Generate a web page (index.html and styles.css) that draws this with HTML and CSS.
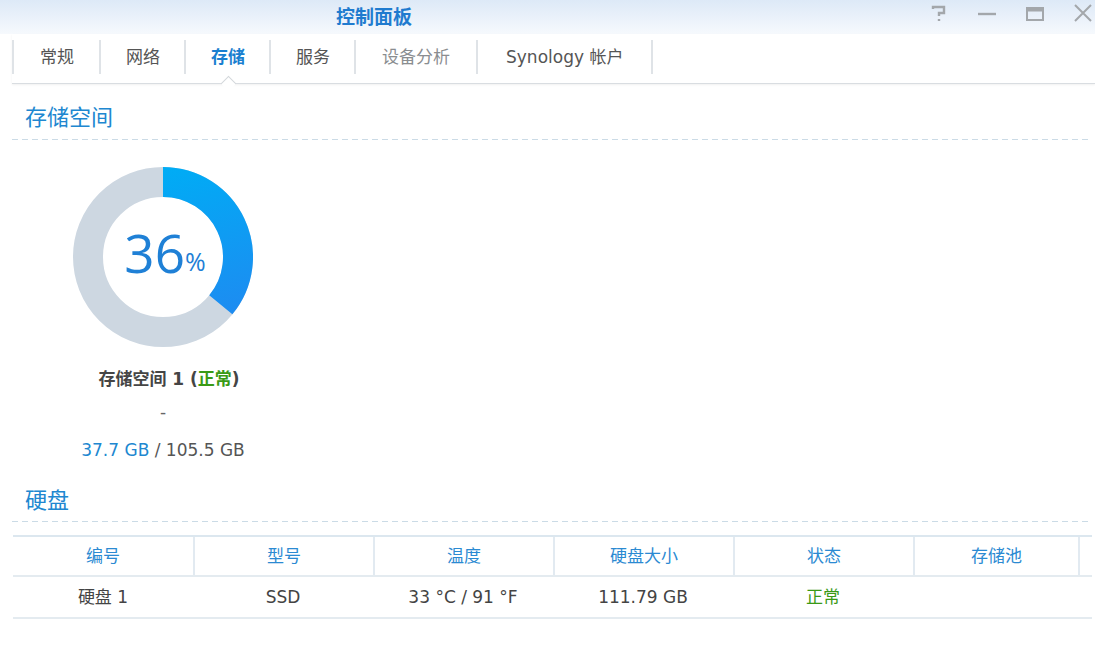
FILE: index.html
```html
<!DOCTYPE html>
<html lang="zh-CN">
<head>
  <meta charset="UTF-8" />
  <title>控制面板</title>
  <link rel="stylesheet" href="styles.css">
</head>
<body>

<header class="titlebar">
  <h1 class="title">控制面板</h1>
  <div class="win-btns">
    <span class="win-btn">
      <svg width="24" height="22" viewBox="0 0 24 22"><path d="M6 7 V5 H17 V11 H12 V14 M12 17 V19" fill="none" stroke="#a3a7ab" stroke-width="2.4"/></svg>
    </span>
    <span class="win-btn">
      <svg width="24" height="22" viewBox="0 0 24 22"><path d="M3 12 H21" stroke="#a3a7ab" stroke-width="2.4"/></svg>
    </span>
    <span class="win-btn">
      <svg width="24" height="22" viewBox="0 0 24 22"><rect x="4" y="6" width="16" height="12" fill="none" stroke="#a3a7ab" stroke-width="2"/><path d="M4 8 H20" stroke="#a3a7ab" stroke-width="3"/></svg>
    </span>
    <span class="win-btn">
      <svg width="24" height="22" viewBox="0 0 24 22"><path d="M4 3 L20 19 M20 3 L4 19" stroke="#a3a7ab" stroke-width="2"/></svg>
    </span>
  </div>
</header>

<nav class="tabs">
  <a class="tab">常规</a>
  <a class="tab">网络</a>
  <a class="tab active">存储</a>
  <a class="tab">服务</a>
  <a class="tab disabled">设备分析</a>
  <a class="tab">Synology 帐户</a>
</nav>

<main class="content">
  <h2 class="section-title">存储空间</h2>
  <div class="dash-line"></div>

  <div class="volume">
    <div class="donut">
      <svg width="180" height="180" viewBox="0 0 180 180">
        <defs>
          <linearGradient id="used" gradientUnits="userSpaceOnUse" x1="100" y1="0" x2="140" y2="150">
            <stop offset="0" stop-color="#00acf5"/>
            <stop offset="1" stop-color="#1d8cf1"/>
          </linearGradient>
        </defs>
        <circle cx="90" cy="90" r="75" fill="none" stroke="#cdd7e1" stroke-width="30"/>
        <path d="M90 15 A75 75 0 0 1 147.8 137.8" fill="none" stroke="url(#used)" stroke-width="30"/>
      </svg>
      <div class="donut-label"><span class="pct">36</span><span class="pct-sign">%</span></div>
    </div>
    <p class="vol-name">存储空间 1 (<span class="ok">正常</span>)</p>
    <p class="vol-desc">-</p>
    <p class="vol-size"><span class="used">37.7 GB</span> / 105.5 GB</p>
  </div>

  <h2 class="section-title disks">硬盘</h2>
  <div class="dash-line"></div>

  <div class="disk-table">
    <div class="row head">
      <div class="cell">编号</div>
      <div class="cell">型号</div>
      <div class="cell">温度</div>
      <div class="cell">硬盘大小</div>
      <div class="cell">状态</div>
      <div class="cell">存储池</div>
      <div class="cell"></div>
    </div>
    <div class="row">
      <div class="cell">硬盘 1</div>
      <div class="cell">SSD</div>
      <div class="cell">33 °C / 91 °F</div>
      <div class="cell">111.79 GB</div>
      <div class="cell ok">正常</div>
      <div class="cell"></div>
      <div class="cell"></div>
    </div>
  </div>
</main>

</body>
</html>
```

FILE: styles.css
```css
* { box-sizing: border-box; margin: 0; padding: 0; }

body {
  font-family: 'DejaVu Sans', 'Noto Sans CJK SC', sans-serif;
  font-size: 17px;
  color: #444;
  background: #fff;
  width: 1095px;
  height: 645px;
  overflow: hidden;
}

.titlebar {
  height: 34px;
  display: flex;
  align-items: center;
  background: linear-gradient(to bottom, #dde9f7, #f6f9fd);
}

.title {
  margin-left: 336px;
  font-size: 19px;
  font-weight: bold;
  color: #1f7bcf;
  line-height: 28px;
}

.win-btns {
  margin-left: auto;
  display: flex;
  gap: 24px;
  align-self: flex-start;
  padding-top: 2px;
}

.win-btn {
  width: 24px;
  height: 22px;
  display: block;
}

.tabs {
  display: flex;
  margin-left: 12px;
  padding: 6px 0 9px;
  border-bottom: 1px solid #d9dde1;
  box-shadow: 0 1px 2px rgba(0, 0, 0, 0.06);
}

.tab {
  position: relative;
  height: 34px;
  line-height: 34px;
  padding: 0 24px 0 25px;
  border-left: 2px solid #dfe3e7;
  color: #555;
  cursor: pointer;
}

.tab:first-child {
  padding: 0 25px 0 26px;
}

.tab:last-child {
  padding: 0 28px;
  border-right: 2px solid #dfe3e7;
}

.tab.active {
  color: #1a7fd0;
  font-weight: bold;
}

.tab.active::after {
  content: "";
  position: absolute;
  left: 50%;
  bottom: -15px;
  width: 10px;
  height: 10px;
  margin-left: -5px;
  background: #fff;
  border-top: 1px solid #d3d7db;
  border-left: 1px solid #d3d7db;
  transform: rotate(45deg);
}

.tab.disabled {
  padding: 0 26px;
  color: #8a8d90;
}

.content {
  padding-left: 12px;
  padding-right: 3px;
}

.section-title {
  margin-top: 16px;
  padding: 0 13px 3px;
  font-size: 22px;
  font-weight: normal;
  line-height: 36px;
  color: #2087d0;
}

.section-title.disks {
  margin-top: 21px;
  padding-bottom: 2px;
}

.dash-line {
  height: 1px;
  background: repeating-linear-gradient(to right, #cbdbe6 0 6px, transparent 6px 10px);
}

.volume {
  width: 302px;
  text-align: center;
  padding-top: 27px;
}

.donut {
  position: relative;
  width: 180px;
  height: 180px;
  margin: 0 auto;
}

.donut svg {
  display: block;
}

.donut-label {
  position: absolute;
  inset: 0;
  display: flex;
  align-items: center;
  justify-content: center;
  padding: 0 0 9px 4px;
  color: #1f80d6;
  font-family: 'Open Sans', sans-serif;
}

.pct {
  font-size: 53px;
  line-height: 1;
}

.pct-sign {
  font-size: 25px;
  margin-top: 16px;
}

.vol-name {
  margin-top: 20px;
  font-size: 17px;
  font-weight: bold;
  line-height: 24px;
  color: #454545;
  padding-left: 12px;
}

.ok {
  color: #3a9a16;
}

.vol-desc {
  margin-top: 9px;
  line-height: 24px;
  color: #666;
}

.vol-size {
  margin-top: 14px;
  line-height: 24px;
  color: #555;
}

.vol-size .used {
  color: #2087d0;
}

.disk-table {
  margin-top: 13px;
  margin-left: 1px;
  border-top: 2px solid #dce7ef;
}

.row {
  display: grid;
  grid-template-columns: repeat(5, 180px) 165px 1fr;
  border-bottom: 2px solid #e4ebf0;
}

.row .cell {
  height: 40px;
  line-height: 40px;
  text-align: center;
  white-space: nowrap;
}

.row.head .cell {
  height: 38px;
  line-height: 38px;
  color: #2b8ad2;
  border-left: 2px solid #e2eaf1;
}

.row.head .cell:first-child {
  border-left: none;
}
```
